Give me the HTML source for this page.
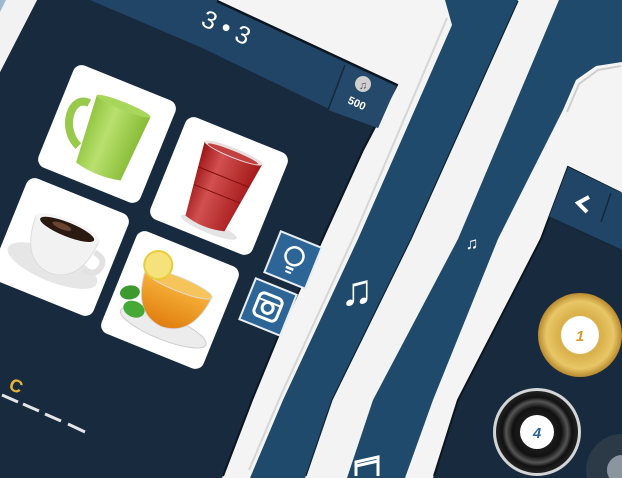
<!DOCTYPE html>
<html><head><meta charset="utf-8"><style>
html,body{margin:0;padding:0;background:#1f4a6b;width:622px;height:478px;overflow:hidden;}
svg{display:block}
text{font-family:"Liberation Sans","DejaVu Sans",sans-serif}
</style></head><body>
<svg width="622" height="478" viewBox="0 0 622 478" xmlns="http://www.w3.org/2000/svg" style="overflow:hidden">
<defs>
<clipPath id="frame"><rect width="622" height="478"/></clipPath>
<radialGradient id="gold" cx="50%" cy="50%" r="50%">
<stop offset="0" stop-color="#f6e39a"/><stop offset="0.5" stop-color="#d9b04a"/><stop offset="0.8" stop-color="#e8c767"/><stop offset="1" stop-color="#b8892c"/>
</radialGradient>
<radialGradient id="blk" cx="50%" cy="50%" r="50%">
<stop offset="0" stop-color="#333"/><stop offset="0.6" stop-color="#111"/><stop offset="0.75" stop-color="#555"/><stop offset="0.85" stop-color="#111"/><stop offset="1" stop-color="#222"/>
</radialGradient>
<linearGradient id="tea" x1="0" y1="0" x2="0" y2="1"><stop offset="0" stop-color="#f7b23a"/><stop offset="1" stop-color="#e07e10"/></linearGradient>
<linearGradient id="mug" x1="0" y1="0" x2="1" y2="0"><stop offset="0" stop-color="#8fc43f"/><stop offset="0.4" stop-color="#b9e06e"/><stop offset="1" stop-color="#86bb36"/></linearGradient>
<linearGradient id="cup" x1="0" y1="0" x2="1" y2="0"><stop offset="0" stop-color="#9c1414"/><stop offset="0.35" stop-color="#d25050"/><stop offset="1" stop-color="#a31818"/></linearGradient>
</defs>
<g clip-path="url(#frame)">
<rect width="622" height="478" fill="#1f4a6b"/>

<polygon points="0,0 445,0 452,25 358,239 283,400 250,478 0,478" fill="#f4f4f4"/>
<polyline points="447,18 356,232 281,395 249,470" fill="none" stroke="#d6d6d6" stroke-width="2"/>
<polygon points="518,0 559,0 458,239 373,400 347,478 305,478 332,400 411,239" fill="#f3f3f3"/>
<polyline points="518,1 411,239 332,400 306,476" fill="none" stroke="#0f2233" stroke-width="1.2"/>
<polygon points="622,62 596,66 576,80 563,110 498,239 433,400 405,478 622,478" fill="#f4f4f4"/>
<polyline points="621,66 598,70 579,84 567,112" fill="none" stroke="#cfcfcf" stroke-width="2"/>

<polygon points="0,72 37,0 217,0 397,85 363,150 277,339 252,400 222,478 0,478" fill="#172a3e"/>
<polyline points="217,1 397,85 363,150 277,339 252,400 223,476" fill="none" stroke="#0c1620" stroke-width="2"/>
<polygon points="0,0 37,0 0,72" fill="#f2f2f2"/>
<polygon points="0,0 6,0 0,12" fill="#9fb8cc"/>
<polygon points="90,0 217,0 397,85 378,128 327,108 200,47" fill="#214566"/>
<polygon points="345,65 397,85 378,128 328,110" fill="#25496b"/>
<line x1="345" y1="65" x2="328" y2="110" stroke="#14283a" stroke-width="1.5"/>
<line x1="217" y1="1" x2="397" y2="85" stroke="#0c1620" stroke-width="2.5"/>
<text x="226" y="36" font-size="25" fill="#fff" text-anchor="middle" transform="rotate(24 226 28)">3 • 3</text>
<circle cx="363" cy="84" r="8" fill="#cfcfcf"/>
<text x="363" y="89" font-size="11" fill="#555" text-anchor="middle" font-family="DejaVu Sans">♫</text>
<text x="357" y="107" font-size="11" fill="#fff" text-anchor="middle" font-weight="bold" transform="rotate(24 357 103)">500</text>

<g transform="translate(107,134) rotate(22)">
<rect x="-55" y="-55" width="110" height="110" rx="9" fill="#fff"/>
<path d="M-28,-22 C-48,-24 -46,12 -22,22" fill="none" stroke="#97c94b" stroke-width="8"/>
<path d="M-24,-32 L34,-32 L30,38 Q5,44 -18,38 Z" fill="url(#mug)"/>
<ellipse cx="5" cy="-32" rx="29" ry="4" fill="#a8d65b"/>
</g>
<g transform="translate(219,186) rotate(22)">
<rect x="-55" y="-55" width="110" height="110" rx="9" fill="#fff"/>
<ellipse cx="6" cy="42" rx="30" ry="6" fill="#e4e4e4"/>
<path d="M-30,-36 L32,-36 L22,40 Q0,46 -20,40 Z" fill="url(#cup)"/>
<ellipse cx="1" cy="-36" rx="31" ry="5" fill="#e9dede"/>
<ellipse cx="1" cy="-35" rx="27" ry="3" fill="#c24040"/>
<line x1="-26" y1="-10" x2="28" y2="-10" stroke="#7e0e0e" stroke-width="1"/>
<line x1="-24" y1="8" x2="26" y2="8" stroke="#7e0e0e" stroke-width="1"/>
</g>
<g transform="translate(60,247) rotate(22)">
<rect x="-55" y="-55" width="110" height="110" rx="9" fill="#fff"/>
<ellipse cx="0" cy="20" rx="48" ry="16" fill="#e6e6e6"/>
<path d="M-34,-20 L34,-20 Q32,26 0,28 Q-32,26 -34,-20 Z" fill="#f2f2f2" stroke="#ddd"/>
<path d="M34,-8 Q50,-6 44,8 Q40,14 30,12" fill="none" stroke="#e2e2e2" stroke-width="6"/>
<ellipse cx="0" cy="-20" rx="34" ry="9" fill="#f5f5f5"/>
<ellipse cx="0" cy="-19" rx="29" ry="7" fill="#2a1a12"/>
<ellipse cx="-6" cy="-20" rx="10" ry="3" fill="#6b4530"/>
</g>
<g transform="translate(170,300) rotate(22)">
<rect x="-55" y="-55" width="110" height="110" rx="9" fill="#fff"/>
<ellipse cx="4" cy="28" rx="46" ry="12" fill="#ececec" stroke="#ccc"/>
<path d="M-34,-18 L38,-18 Q34,26 2,28 Q-30,26 -34,-18 Z" fill="url(#tea)" stroke="#d9d9d9"/>
<ellipse cx="2" cy="-18" rx="36" ry="7" fill="#f5c45a" stroke="#ddd"/>
<circle cx="-24" cy="-28" r="14" fill="#f6e27a" stroke="#e9cd3a" stroke-width="2"/>
<ellipse cx="-40" cy="8" rx="10" ry="7" fill="#3d9a2e" transform="rotate(-30 -40 8)"/>
<ellipse cx="-30" cy="22" rx="11" ry="8" fill="#46a935"/>
</g>

<g transform="translate(293,260) rotate(22)">
<rect x="-22" y="-22" width="44" height="44" fill="#2e6597" stroke="#e8eef4" stroke-width="2"/>
<circle cx="0" cy="-4" r="9" fill="none" stroke="#fff" stroke-width="2.5"/>
<line x1="-4" y1="9" x2="4" y2="9" stroke="#fff" stroke-width="2.5"/>
<line x1="-3" y1="13" x2="3" y2="13" stroke="#fff" stroke-width="2"/>
</g>
<g transform="translate(268,307) rotate(22)">
<rect x="-22" y="-22" width="44" height="44" fill="#2e6597" stroke="#e8eef4" stroke-width="2"/>
<rect x="-12" y="-12" width="24" height="24" rx="5" fill="none" stroke="#fff" stroke-width="3"/>
<circle cx="0" cy="1" r="5.5" fill="none" stroke="#fff" stroke-width="3"/>
<line x1="-12" y1="-5" x2="12" y2="-5" stroke="#fff" stroke-width="2"/>
</g>

<text x="16" y="392" font-size="18" font-weight="bold" fill="#e8b23a" text-anchor="middle" transform="rotate(22 16 386)">C</text>
<g stroke="#e5e5e5" stroke-width="3">
<line x1="2" y1="395" x2="18" y2="402"/>
<line x1="23" y1="404" x2="39" y2="411"/>
<line x1="45" y1="414" x2="61" y2="421"/>
<line x1="68" y1="424" x2="85" y2="432"/>
</g>

<polygon points="568,167 622,193 622,478 433,478 458,400 541,239" fill="#172a3e"/>
<polyline points="621,193 568,167 541,239 458,400 434,476" fill="none" stroke="#0c1620" stroke-width="2"/>
<polygon points="568,167 622,193 622,250 549,217" fill="#214566"/>
<line x1="549" y1="217" x2="621" y2="250" stroke="#14283a" stroke-width="1.5"/>
<line x1="611" y1="193" x2="601" y2="222" stroke="#14283a" stroke-width="1.5"/>
<polyline points="589,197 578,203 587,212" fill="none" stroke="#fff" stroke-width="4" stroke-linejoin="miter"/>

<circle cx="580" cy="335" r="42" fill="url(#gold)"/>
<circle cx="580" cy="335" r="19" fill="#fff"/>
<text x="580" y="341" font-size="15" font-weight="bold" fill="#d89a2a" text-anchor="middle" font-style="italic">1</text>
<circle cx="537" cy="432" r="44" fill="#e8e8e8" opacity="0.9"/>
<circle cx="537" cy="432" r="41" fill="url(#blk)"/>
<circle cx="537" cy="432" r="17" fill="#fff"/>
<text x="537" y="438" font-size="15" font-weight="bold" fill="#2e6597" text-anchor="middle" font-style="italic">4</text>
<path d="M587,478 A36,36 0 0 1 622,434 L622,478 Z" fill="#2c3a48"/>
<path d="M609.3,478 A15,15 0 0 1 622,455 L622,478 Z" fill="#8a959f"/>

<text x="357" y="305" font-size="44" fill="#fff" text-anchor="middle" font-family="DejaVu Sans">♫</text>
<text x="472" y="249" font-size="17" fill="#fff" text-anchor="middle" font-family="DejaVu Sans">♫</text>
<path d="M356,476 L356,462 L378,457 L378,476 M356,466 L378,461" fill="none" stroke="#fff" stroke-width="3"/>
</g>
</svg>
</body></html>
